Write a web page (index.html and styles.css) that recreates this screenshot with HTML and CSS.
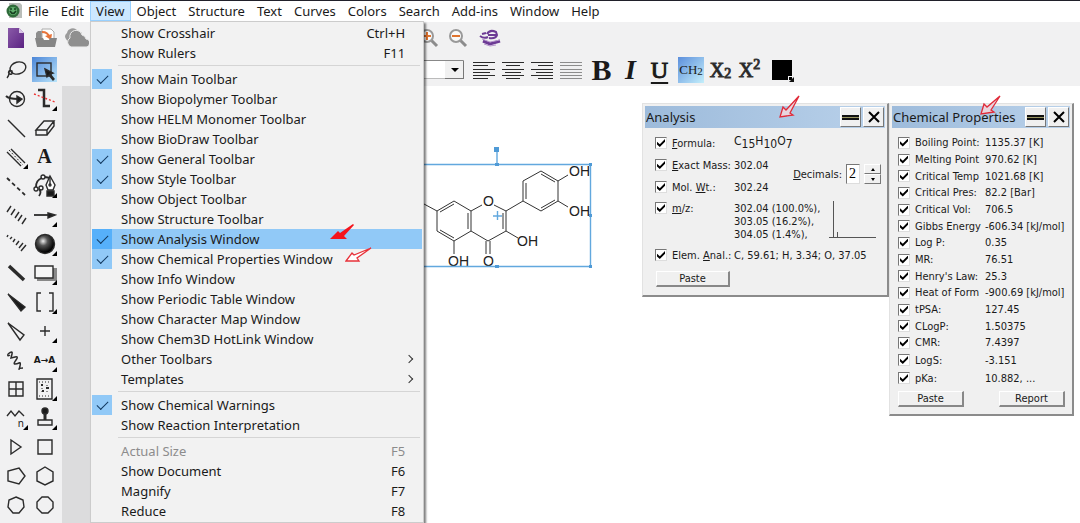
FILE: index.html
```
<!DOCTYPE html>
<html lang="en">
<head>
    <meta charset="UTF-8">
    <meta name="viewport" content="width=device-width, initial-scale=1.0">
    <title>ChemDraw</title>
    <link rel="stylesheet" href="styles.css">
</head>
<body>
    <nav class="menubar">
        <svg class="app-icon" width="16" height="16" viewBox="0 0 16 16">
            <path d="M3 0h11l2 2v13H3z" fill="#b9bdb9"/>
            <circle cx="7" cy="8" r="6.5" fill="#2f6b3a"/>
            <circle cx="7" cy="8" r="4" fill="#5fae6c"/>
            <path d="M4 8q3 5 6 0M4 6h2M8 6h2" stroke="#173f20" stroke-width="1.5" fill="none"/>
        </svg>
        <button class="menu-title">File</button>
        <button class="menu-title">Edit</button>
        <div class="menu-open">
            <button class="menu-title active">View</button>
            <div class="dropdown" role="menu">
                <button class="item"><span class="check"></span>Show Crosshair<kbd>Ctrl+H</kbd></button>
                <button class="item"><span class="check"></span>Show Rulers<kbd>F11</kbd></button>
                <hr>
                <button class="item checked"><span class="check"></span>Show Main Toolbar</button>
                <button class="item"><span class="check"></span>Show Biopolymer Toolbar</button>
                <button class="item"><span class="check"></span>Show HELM Monomer Toolbar</button>
                <button class="item"><span class="check"></span>Show BioDraw Toolbar</button>
                <button class="item checked"><span class="check"></span>Show General Toolbar</button>
                <button class="item checked"><span class="check"></span>Show Style Toolbar</button>
                <button class="item"><span class="check"></span>Show Object Toolbar</button>
                <button class="item"><span class="check"></span>Show Structure Toolbar</button>
                <button class="item checked hover"><span class="check"></span>Show Analysis Window</button>
                <button class="item checked"><span class="check"></span>Show Chemical Properties Window</button>
                <button class="item"><span class="check"></span>Show Info Window</button>
                <button class="item"><span class="check"></span>Show Periodic Table Window</button>
                <button class="item"><span class="check"></span>Show Character Map Window</button>
                <button class="item"><span class="check"></span>Show Chem3D HotLink Window</button>
                <button class="item submenu"><span class="check"></span>Other Toolbars</button>
                <button class="item submenu"><span class="check"></span>Templates</button>
                <hr>
                <button class="item checked"><span class="check"></span>Show Chemical Warnings</button>
                <button class="item"><span class="check"></span>Show Reaction Interpretation</button>
                <hr>
                <button class="item" disabled><span class="check"></span>Actual Size<kbd>F5</kbd></button>
                <button class="item"><span class="check"></span>Show Document<kbd>F6</kbd></button>
                <button class="item"><span class="check"></span>Magnify<kbd>F7</kbd></button>
                <button class="item"><span class="check"></span>Reduce<kbd>F8</kbd></button>
                <svg class="arrow arrow-solid" width="26" height="17" viewBox="0 0 26 17">
                    <path d="M0 15L8 7L10 9L23 0L24 1L14 12L17 15Z" fill="#f5141c"/>
                </svg>
                <svg class="arrow arrow-outline" width="28" height="17" viewBox="0 0 28 17">
                    <path d="M1 14L7 6L9 8L26 1L12 11L14 14Z" fill="#fff" stroke="#e8323a" stroke-width="1.3"/>
                </svg>
            </div>
        </div>
        <button class="menu-title">Object</button>
        <button class="menu-title">Structure</button>
        <button class="menu-title">Text</button>
        <button class="menu-title">Curves</button>
        <button class="menu-title">Colors</button>
        <button class="menu-title">Search</button>
        <button class="menu-title">Add-ins</button>
        <button class="menu-title">Window</button>
        <button class="menu-title">Help</button>
    </nav>

    <!-- main toolbar -->
    <div class="toolbar">
        <div class="file-tools">
            <button class="tool" aria-label="New">
                <svg width="18" height="22" viewBox="0 0 18 22">
                    <defs><linearGradient id="doc" x1="0" y1="0" x2="1" y2="1"><stop offset="0" stop-color="#8a5aa8"/><stop offset="1" stop-color="#5b2383"/></linearGradient></defs>
                    <path d="M1 1h11l5 5v15H1z" fill="url(#doc)"/><path d="M12 1v5h5z" fill="#d9c6e6"/>
                </svg>
            </button>
            <button class="tool" aria-label="Open">
                <svg width="22" height="20" viewBox="0 0 22 20">
                    <path d="M1 18V5l2-2h5l2 2h1v5H1z" fill="#8d8d8d"/>
                    <path d="M7 1h9l3 3v10H7z" fill="#fff" stroke="#aaa"/>
                    <path d="M7 4q6 0 7 5" stroke="#e8743a" stroke-width="2" fill="none"/><path d="M10 8l7-2-1 6z" fill="#e8743a"/>
                    <path d="M0 10h8l1 2h5l1-2h7l-2 9H2z" fill="#858585"/>
                </svg>
            </button>
            <button class="tool" aria-label="Cloud">
                <svg width="26" height="20" viewBox="0 0 26 20">
                    <path d="M3 11a4 4 0 0 1 1-6 6 6 0 0 1 10-3l5 3-6 9H5z" fill="#9b9b9b"/>
                    <path d="M8 19a5 5 0 0 1-1-9 6 6 0 0 1 12-3 5 5 0 0 1 4 4 4 4 0 0 1-1 8z" fill="#8f8f8f" stroke="#ececec"/>
                </svg>
            </button>
        </div>
        <div class="view-tools">
            <button class="tool" aria-label="Zoom in">
                <svg width="20" height="20" viewBox="0 0 20 20">
                    <path d="M12 12l6 6" stroke="#8c8c8c" stroke-width="3"/><circle cx="8" cy="8" r="6" fill="#fafafa" stroke="#999" stroke-width="2"/>
                    <path d="M4 8h8M8 4v8" stroke="#e0742f" stroke-width="2"/>
                </svg>
            </button>
            <button class="tool" aria-label="Zoom out">
                <svg width="20" height="20" viewBox="0 0 20 20">
                    <path d="M12 12l6 6" stroke="#8c8c8c" stroke-width="3"/><circle cx="8" cy="8" r="6" fill="#fafafa" stroke="#999" stroke-width="2"/>
                    <path d="M4 8h8" stroke="#e0742f" stroke-width="2"/>
                </svg>
            </button>
            <button class="tool" aria-label="ChemACX">
                <svg width="24" height="18" viewBox="0 0 24 18">
                    <g fill="none" stroke="#6d3b95"><path d="M9 5q3-5 9-2l1 3q-1 4-8 3M2 7q4 3 8 1M4 5l4-1M10 6h8" stroke-width="2"/><path d="M5 12l7 3 10-3" stroke-width="3"/></g>
                    <path d="M4 10l8 3 10-2M6 15l6 2 6-1" stroke="#b695cc" fill="none"/>
                </svg>
            </button>
        </div>
    </div>

    <div class="workspace">
        <!-- general toolbar -->
        <aside class="palette">
            <button aria-label="Lasso"><svg viewBox="0 0 24 24"><ellipse cx="14" cy="10" rx="8" ry="6" transform="rotate(-15 14 10)"/><path d="M6 12q-3 3 0 4t2-3q-3-1-3 2t-2 5"/></svg></button>
            <button class="selected" aria-label="Marquee"><svg viewBox="0 0 24 24"><rect x="4" y="5" width="14" height="13"/><path class="solid" d="M12 11l8 4-3 1 4 5-1 1-4-5-2 2z"/></svg></button>
            <button aria-label="Structure perspective"><svg viewBox="0 0 24 24"><circle cx="13" cy="12" r="7.5"/><path d="M2 9q3 3 12 3" stroke-width="2"/><path class="solid" d="M13 9l5 3-5 4z"/></svg></button>
            <button class="more" aria-label="Mass fragmentation"><svg viewBox="0 0 24 24"><path d="M5 3h6v16h6" stroke-width="2.5"/><path d="M1 7l21 8" stroke="#e33" stroke-dasharray="2 2"/></svg></button>
            <button aria-label="Solid bond"><svg viewBox="0 0 24 24"><path d="M4 4l17 17"/></svg></button>
            <button aria-label="Eraser"><svg viewBox="0 0 24 24"><path d="M3 14l8-9h10l-7 9zM3 14v5h11v-5M14 19l7-9V5"/></svg></button>
            <button class="more" aria-label="Multiple bonds"><svg viewBox="0 0 24 24"><path d="M3 7l14 14M7 4l14 14"/><path d="M5 5l14 15" stroke-width="1" stroke-dasharray="2 2"/></svg></button>
            <button class="letter" aria-label="Text">A</button>
            <button aria-label="Dashed bond"><svg viewBox="0 0 24 24"><path d="M3 4l18 17" stroke-width="1.8" stroke-dasharray="4 3"/></svg></button>
            <button class="more" aria-label="Pen"><svg viewBox="0 0 24 24"><circle cx="10" cy="3" r="2"/><circle cx="8" cy="14" r="2"/><circle cx="3" cy="15" r="2"/><path d="M9 4q-6 2-6 9M12 3l5 1M6 15q3 3 0 7" stroke-width="1.8"/><path d="M17 2l-4 9 2 5h5l2-5z" fill="#fff"/><path d="M17 3v8"/><circle cx="17" cy="11" r="1"/><path class="solid" d="M14 17h7v5h-7z"/></svg></button>
            <button aria-label="Hashed bond"><svg viewBox="0 0 24 24"><path d="M3 9l4-6M7 12l4-6M11 15l4-6M14 18l4-6M18 21l4-6"/></svg></button>
            <button class="more" aria-label="Arrow"><svg viewBox="0 0 24 24"><path d="M1 12h17" stroke-width="1.8"/><path class="solid" d="M15 10l7 2-7 3z"/></svg></button>
            <button aria-label="Hashed wedged bond"><svg viewBox="0 0 24 24"><path d="M3 5l1-2M6 7l2-2M9 10l2-3M12 13l3-4M15 16l4-5M17 19l5-6"/></svg></button>
            <button class="more" aria-label="Orbital"><svg viewBox="0 0 24 24"><defs><radialGradient id="ball" cx=".4" cy=".35" r=".6"><stop offset="0" stop-color="#eee"/><stop offset=".4" stop-color="#555"/><stop offset="1" stop-color="#000"/></radialGradient></defs><circle cx="12" cy="12" r="9.5" fill="url(#ball)"/></svg></button>
            <button aria-label="Bold bond"><svg viewBox="0 0 24 24"><path d="M5 5l15 14" stroke-width="3.5"/></svg></button>
            <button class="more" aria-label="Drawing element"><svg viewBox="0 0 24 24"><path d="M4 7h20v13H4z" fill="#888" stroke="none"/><path d="M2 5h18v12H2z" fill="#f6f6f6"/></svg></button>
            <button aria-label="Wedged bond"><svg viewBox="0 0 24 24"><path class="solid" d="M4 4l17 13-4 4z"/></svg></button>
            <button class="more" aria-label="Bracket"><svg viewBox="0 0 24 24"><path d="M8 3H4v18h4M16 3h4v18h-4"/></svg></button>
            <button aria-label="Hollow wedged bond"><svg viewBox="0 0 24 24"><path d="M4 4l16 12-4 5z"/></svg></button>
            <button class="more" aria-label="Chemical symbol"><svg viewBox="0 0 24 24"><path d="M12 7v10M7 12h10"/></svg></button>
            <button aria-label="Wavy bond"><svg viewBox="0 0 24 24"><path d="M4 6q5-4 4 0t-1 4 4-1 1 3-1 4 4-1 1 3-1 3 4-1M4 6q-1 3 2 1" stroke-width="1.5"/></svg></button>
            <button class="letter small more" aria-label="Atom map">A→A</button>
            <button aria-label="Table"><svg viewBox="0 0 24 24"><path d="M5 5h14v14H5zM12 5v14M5 12h14"/></svg></button>
            <button class="more" aria-label="TLC plate"><svg viewBox="0 0 24 24"><path d="M4 2h15v20H4z"/><path d="M6 5h11M6 19h11M9 8v8M14 8v8" stroke-width="1" stroke-dasharray="1 2"/><path d="M8 8h2M13 11h3M9 14h2" stroke-width="2"/></svg></button>
            <button class="chain more" aria-label="Acyclic chain"><svg viewBox="0 0 24 24"><path d="M3 10l4-5 4 5 4-5 5 5"/></svg><span>n</span></button>
            <button class="more" aria-label="Template"><svg viewBox="0 0 24 24"><circle class="solid" cx="12" cy="5" r="3"/><path d="M12 8v6" stroke-width="3"/><path d="M5 14h14v5H5z"/></svg></button>
            <button aria-label="Cyclopropane"><svg viewBox="0 0 24 24"><path d="M7 5v14l10-7z"/></svg></button>
            <button aria-label="Cyclobutane"><svg viewBox="0 0 24 24"><path d="M5 5h14v14H5z"/></svg></button>
            <button aria-label="Cyclopentane"><svg viewBox="0 0 24 24"><path d="M15 4l6 8-6 8-11-3V7z"/></svg></button>
            <button aria-label="Cyclohexane"><svg viewBox="0 0 24 24"><path d="M12 3l8 5v9l-8 4-8-4V8z"/></svg></button>
            <button aria-label="Cycloheptane"><svg viewBox="0 0 24 24"><path d="M12 4l7 3 1 7-5 6H9l-5-6 1-7z"/></svg></button>
            <button aria-label="Cyclooctane"><svg viewBox="0 0 24 24"><path d="M9 4h6l5 5v6l-5 5H9l-5-5V9z"/></svg></button>
        </aside>

        <div class="main">
            <!-- style toolbar -->
            <div class="toolbar style-toolbar">
                <div class="size-box">
                    <select aria-label="Font size"><option></option></select>
                </div>
                <div class="group">
                    <button class="tool" aria-label="Left"><svg width="22" height="18" viewBox="0 0 22 18"><path d="M0 1h22M0 8h22M0 14h22" /><path d="M0 4h15M0 11h17M0 17h15"/></svg></button>
                    <button class="tool" aria-label="Center"><svg width="22" height="18" viewBox="0 0 22 18"><path d="M0 1h22M0 8h22M0 14h22"/><path d="M4 4h14M3 11h16M4 17h14"/></svg></button>
                    <button class="tool" aria-label="Right"><svg width="22" height="18" viewBox="0 0 22 18"><path d="M0 1h22M0 8h22M0 14h22"/><path d="M7 4h15M5 11h17M7 17h15"/></svg></button>
                    <button class="tool faded" aria-label="Justify"><svg width="22" height="18" viewBox="0 0 22 18"><path d="M0 1h22M0 4h22M0 8h22M0 11h22M0 14h22M0 17h22"/></svg></button>
                </div>
                <div class="group">
                    <button class="tool bold">B</button>
                    <button class="tool italic">I</button>
                    <button class="tool underline">U</button>
                </div>
                <div class="group">
                    <button class="tool formula">CH<small>2</small></button>
                    <button class="tool script">X<small class="low">2</small></button>
                    <button class="tool script">X<small class="high">2</small></button>
                </div>
                <div class="group">
                    <button class="tool swatch-btn" aria-label="Color"><span class="swatch more"></span></button>
                </div>
            </div>

            <div class="canvas">
                <!-- quercetin -->
                <svg class="molecule" width="170" height="125" viewBox="424 145 170 125">
                    <g class="bonds">
                        <path d="M424 204L437 211L454 201L471 211V231L454 241L437 231V211M471 211L482 205M494 205L506 211V231L488 241L471 231M454 241V254"/>
                        <path d="M440 212L454 204M468 213V229M454 238L440 230M503 213V229M486 241V254M490 241V254"/>
                        <path d="M506 231L518 238M506 211L523 201V181L541 171L558 181V201L541 211L523 201M558 181L568 175M558 201L568 207"/>
                        <path d="M526 199V183M541 174L555 182M555 200L541 208"/>
                    </g>
                    <g class="atoms">
                        <text x="483" y="206">O</text>
                        <text x="569" y="176">OH</text>
                        <text x="569" y="216">OH</text>
                        <text x="517" y="246">OH</text>
                        <text x="448" y="266">OH</text>
                        <text x="483" y="266">O</text>
                    </g>
                    <g class="selection">
                        <path d="M424 164.5H590.5V266.5H424M497 164V150M493 216h9M497.5 211v9"/>
                        <path class="handles" d="M494 147h5v5h-5zM495 163h4v3h-4zM589 163h3v3h-3zM589 214h3v3h-3zM589 265h3v3h-3zM495 265h4v3h-4z"/>
                    </g>
                </svg>

                <section class="window analysis">
                    <header>
                        <h2>Analysis</h2>
                        <button class="win-btn" aria-label="Collapse"><i class="dash"></i></button>
                        <button class="win-btn" aria-label="Close"><svg width="12" height="12" viewBox="0 0 12 12"><path d="M1 1l10 10M11 1L1 11"/></svg></button>
                    </header>
                    <div class="analysis-body">
                        <div class="results">
                            <input type="checkbox" id="formula" checked><label for="formula"><u>F</u>ormula:</label><span class="chem-formula">C<sub>15</sub>H<sub>10</sub>O<sub>7</sub></span>
                            <input type="checkbox" id="mass" checked><label for="mass"><u>E</u>xact Mass:</label><span>302.04</span>
                            <input type="checkbox" id="weight" checked><label for="weight">Mol. <u>W</u>t.:</label><span>302.24</span>
                            <input type="checkbox" id="mz" checked><label for="mz"><u>m</u>/z:</label><span class="peaks">302.04 (100.0%),<br>303.05 (16.2%),<br>304.05 (1.4%),</span>
                            <input type="checkbox" id="elem" checked><label for="elem">Elem. <u>A</u>nal.:</label><span>C, 59.61; H, 3.34; O, 37.05</span>
                        </div>
                        <div class="decimals">
                            <label for="decimals"><u>D</u>ecimals:</label>
                            <input type="text" id="decimals" value="2">
                            <div class="spinner">
                                <button aria-label="Increase"></button>
                                <button class="down" aria-label="Decrease"></button>
                            </div>
                        </div>
                        <svg class="spectrum" width="47" height="38" viewBox="0 0 47 38"><path d="M0 36.5H47M4.5 0V37M8.5 31V37"/></svg>
                        <button class="push">Paste</button>
                    </div>
                    <svg class="arrow arrow-analysis" width="24" height="24" viewBox="0 0 24 24">
                        <path d="M2 22L5 12L8 15L21 1L12 18L15 20Z" fill="#e9d5de" stroke="#e02a38" stroke-width="1.3"/>
                    </svg>
                </section>

                <section class="window properties">
                    <header>
                        <h2>Chemical Properties</h2>
                        <button class="win-btn" aria-label="Collapse"><i class="dash"></i></button>
                        <button class="win-btn" aria-label="Close"><svg width="12" height="12" viewBox="0 0 12 12"><path d="M1 1l10 10M11 1L1 11"/></svg></button>
                    </header>
                    <table>
                        <tr><td><input type="checkbox" id="p1" checked></td><th><label for="p1">Boiling Point:</label></th><td>1135.37 [K]</td></tr>
                        <tr><td><input type="checkbox" id="p2" checked></td><th><label for="p2">Melting Point</label></th><td>970.62 [K]</td></tr>
                        <tr><td><input type="checkbox" id="p3" checked></td><th><label for="p3">Critical Temp</label></th><td>1021.68 [K]</td></tr>
                        <tr><td><input type="checkbox" id="p4" checked></td><th><label for="p4">Critical Pres:</label></th><td>82.2 [Bar]</td></tr>
                        <tr><td><input type="checkbox" id="p5" checked></td><th><label for="p5">Critical Vol:</label></th><td>706.5</td></tr>
                        <tr><td><input type="checkbox" id="p6" checked></td><th><label for="p6">Gibbs Energy</label></th><td>-606.34 [kJ/mol]</td></tr>
                        <tr><td><input type="checkbox" id="p7" checked></td><th><label for="p7">Log P:</label></th><td>0.35</td></tr>
                        <tr><td><input type="checkbox" id="p8" checked></td><th><label for="p8">MR:</label></th><td>76.51</td></tr>
                        <tr><td><input type="checkbox" id="p9" checked></td><th><label for="p9">Henry's Law:</label></th><td>25.3</td></tr>
                        <tr><td><input type="checkbox" id="p10" checked></td><th><label for="p10">Heat of Form</label></th><td>-900.69 [kJ/mol]</td></tr>
                        <tr><td><input type="checkbox" id="p11" checked></td><th><label for="p11">tPSA:</label></th><td>127.45</td></tr>
                        <tr><td><input type="checkbox" id="p12" checked></td><th><label for="p12">CLogP:</label></th><td>1.50375</td></tr>
                        <tr><td><input type="checkbox" id="p13" checked></td><th><label for="p13">CMR:</label></th><td>7.4397</td></tr>
                        <tr class="tall"><td><input type="checkbox" id="p14" checked></td><th><label for="p14">LogS:</label></th><td>-3.151</td></tr>
                        <tr class="tall"><td><input type="checkbox" id="p15" checked></td><th><label for="p15">pKa:</label></th><td>10.882, ...</td></tr>
                    </table>
                    <footer>
                        <button class="push">Paste</button>
                        <button class="push">Report</button>
                    </footer>
                    <svg class="arrow arrow-properties" width="24" height="24" viewBox="0 0 24 24">
                        <path d="M2 22L5 12L8 15L21 4L12 18L15 20Z" fill="#e9d5de" stroke="#e02a38" stroke-width="1.3"/>
                    </svg>
                </section>
            </div>
        </div>
    </div>
</body>
</html>
```
FILE: styles.css
```
* {
    box-sizing: border-box;
}

body {
    display: flex;
    flex-direction: column;
    min-height: 100vh;
    margin: 0;
    background: #f1f1f2;
    color: #1a1a1a;
    font-family: "Noto Sans", sans-serif;
    font-size: 13px;
}

button {
    margin: 0;
    padding: 0;
    border: none;
    background: none;
    color: inherit;
    font: inherit;
}

/* menu bar */
.menubar {
    display: flex;
    height: 22px;
    border-top: 1px solid #20202a;
    background: #fff;
}

.app-icon {
    margin: 2px 0 0 6px;
}

.menu-title {
    display: block;
    height: 20px;
    padding: 0 6px;
    line-height: 20px;
}

.menu-title.active {
    background: #cce8ff;
    box-shadow: 0 0 0 1px #99d1ff inset;
}

.menu-open {
    position: relative;
}

.dropdown {
    position: absolute;
    top: 20px;
    left: 0;
    z-index: 10;
    width: 334px;
    padding: 1px;
    border: 1px solid #ccc;
    background: #f2f2f2;
    box-shadow: 2px 2px 2px rgba(0, 0, 0, 0.5);
}

.dropdown hr {
    height: 1px;
    margin: 2px 2px 3px 26px;
    border: none;
    background: #d5d5d5;
}

.item {
    display: flex;
    align-items: center;
    width: 100%;
    height: 20px;
    padding-right: 17px;
    line-height: 20px;
    white-space: nowrap;
}

.item:disabled {
    color: #8c8c8c;
}

.item kbd {
    margin-left: auto;
    font: inherit;
}

.check {
    display: flex;
    align-items: center;
    justify-content: center;
    width: 20px;
    height: 20px;
    margin-right: 9px;
}

.checked .check {
    background: #91c9f7;
}

.checked .check::before {
    content: "";
    width: 10px;
    height: 5px;
    margin-bottom: 3px;
    border-left: 1px solid #123a60;
    border-bottom: 1px solid #123a60;
    transform: rotate(-45deg);
}

.item.hover {
    background: #91c9f7;
}

.item.hover .check {
    background: #56b0fa;
}

.submenu::after {
    content: "";
    width: 5px;
    height: 5px;
    margin-left: auto;
    margin-right: -7px;
    border-top: 1px solid #333;
    border-right: 1px solid #333;
    transform: rotate(45deg);
}

.arrow {
    position: absolute;
}

.arrow-solid {
    top: 202px;
    left: 239px;
}

.arrow-outline {
    top: 225px;
    left: 254px;
}

/* toolbars */
.toolbar {
    display: flex;
    align-items: center;
    height: 31px;
}

.tool {
    display: flex;
    align-items: center;
    justify-content: center;
    width: 29px;
    height: 26px;
}

.file-tools {
    display: flex;
    gap: 1px;
    width: 414px;
    padding-left: 1px;
}

.view-tools {
    display: flex;
}

.view-tools .tool:last-child {
    width: 36px;
}

.workspace {
    display: flex;
    flex: 1;
}

.palette {
    display: grid;
    grid-template-columns: 25px 25px;
    grid-auto-rows: 25px;
    gap: 4px;
    width: 62px;
    padding: 4px 0 0 3px;
}

.palette button {
    position: relative;
    display: flex;
    align-items: center;
    justify-content: center;
}

.palette svg {
    width: 24px;
    height: 24px;
    fill: none;
    stroke: #2b2b2b;
    stroke-width: 1.4;
}

.palette .solid {
    fill: #1a1a1a;
}

.palette .selected {
    background: linear-gradient(135deg, #4c86d8, #b9e4fa);
}

.more {
    position: relative;
}

.more::after {
    content: "";
    position: absolute;
    right: 0;
    bottom: 0;
    border-left: 5px solid transparent;
    border-bottom: 5px solid #000;
}

.palette .letter {
    font: bold 20px "Liberation Serif", serif;
}

.palette .letter.small {
    font: bold 9px "DejaVu Sans", sans-serif;
}

.chain span {
    position: absolute;
    right: 4px;
    bottom: 1px;
    font-size: 10px;
    line-height: 12px;
}

.main {
    display: flex;
    flex: 1;
    flex-direction: column;
}

.style-toolbar {
    gap: 2px;
    height: 33px;
}

.size-box {
    position: relative;
    width: 80px;
    height: 19px;
    margin: 0 3px 0 322px;
}

.size-box select {
    appearance: none;
    width: 100%;
    height: 100%;
    padding: 0;
    border: 1px solid #888;
    border-right-color: #bbb;
    border-bottom-color: #bbb;
    border-radius: 0;
    background: #fff;
}

/* raised drop-down button with its triangle */
.size-box::before {
    content: "";
    position: absolute;
    top: 1px;
    right: 0;
    width: 18px;
    height: 17px;
    border-right: 1px solid #777;
    border-bottom: 1px solid #777;
    background: #f1f1f1;
}

.size-box::after {
    content: "";
    position: absolute;
    top: 8px;
    right: 5px;
    border: 4px solid transparent;
    border-top-color: #000;
    border-bottom: none;
}

.group {
    display: flex;
}

.group svg {
    fill: none;
    stroke: #2b2b2b;
    stroke-width: 1;
    shape-rendering: crispEdges;
}

.faded {
    opacity: 0.5;
}

.bold,
.italic,
.underline,
.script,
.formula {
    font-family: "Liberation Serif", serif;
}

.bold {
    font-size: 30px;
    font-weight: bold;
}

.italic {
    font-size: 28px;
    font-style: italic;
    font-weight: bold;
}

.underline {
    font-size: 24px;
    text-decoration: underline 2px;
    text-underline-offset: 4px;
    -webkit-text-stroke: 1px #1a1a1a;
}

.underline,
.script {
    line-height: 24px;
}

.script {
    font-size: 20px;
    -webkit-text-stroke: 1px #333;
}

.script small {
    font-size: 14px;
}

.low {
    margin-top: 8px;
}

.high {
    margin-bottom: 10px;
}

.formula {
    width: 26px;
    margin: 0 2px;
    background: linear-gradient(135deg, #5c8fdc, #c4effb);
    font-size: 13px;
}

.formula small {
    margin-top: 2px;
    font-size: 11px;
}

.swatch-btn {
    padding-left: 2px;
}

.swatch {
    width: 20px;
    height: 20px;
    background: #000;
}

.swatch.more::after {
    right: -2px;
    bottom: -2px;
    border-bottom-color: #111;
    outline: 1px solid #f1f1f2;
}

/* drawing area */
.canvas {
    position: relative;
    flex: 1;
    border-left: 28px solid #dcdcdd;
    background: #fff;
}

.molecule {
    position: absolute;
    top: 59px;
    left: 334px;
}

.bonds {
    fill: none;
    stroke: #333;
    stroke-width: 1;
}

.atoms {
    fill: #222;
    font: 14px "Liberation Sans", sans-serif;
}

.selection {
    fill: none;
    stroke: #62a8de;
    stroke-width: 1.4;
}

.selection .handles {
    fill: #4f9ad6;
    stroke: none;
}

/* floating windows */
.window {
    position: absolute;
    top: 17px;
    padding: 2px;
    border: 1px solid #e2e2e2;
    border-right: 2px solid #8b8b8b;
    border-bottom: 2px solid #8b8b8b;
    background: #f0f0f0;
    font: 11px/13px "DejaVu Sans Condensed", "DejaVu Sans", sans-serif;
}

.analysis {
    right: 191px;
    width: 247px;
}

.properties {
    right: 6px;
    width: 185px;
}

.window header {
    display: flex;
    align-items: center;
    gap: 2px;
    height: 22px;
    padding: 0 1px;
    background: linear-gradient(90deg, #9dbbdb, #b9d1ea);
}

.window h2 {
    flex: 1;
    margin: 0;
    font: 13px/22px "Noto Sans", sans-serif;
    white-space: nowrap;
}

.win-btn {
    display: flex;
    align-items: center;
    justify-content: center;
    width: 21px;
    height: 20px;
    border: 1px solid #fff;
    border-right-color: #777;
    border-bottom-color: #777;
    background: #f0f0f0;
}

.win-btn svg {
    stroke: #000;
    stroke-width: 2;
}

.dash {
    width: 17px;
    height: 5px;
    border: solid #111;
    border-width: 2px 0;
    background: #9a9662;
}

input[type="checkbox"] {
    display: block;
    appearance: none;
    width: 12px;
    height: 12px;
    margin: 0;
    border: 1px solid #777;
    border-right-color: #ddd;
    border-bottom-color: #ddd;
    background: #fff;
}

input[type="checkbox"]:checked::before {
    content: "";
    display: block;
    width: 8px;
    height: 8px;
    margin: 1px;
    background: #000;
    clip-path: polygon(0 35%, 35% 65%, 100% 0, 100% 35%, 35% 100%, 0 70%);
}

.analysis-body {
    position: relative;
    padding: 4px 0 6px 10px;
}

.results {
    display: grid;
    grid-template-columns: 12px 57px 1fr;
    grid-template-rows: 22px 22px 22px 46px 22px;
    column-gap: 5px;
    align-items: center;
    white-space: nowrap;
}

.results #mz,
.results [for="mz"],
.peaks {
    align-self: start;
    margin-top: 4px;
}

.chem-formula,
.chem-formula sub {
    font-size: 12px;
    line-height: 0;
}

.decimals {
    position: absolute;
    top: 36px;
    right: 4px;
    display: flex;
    align-items: center;
    gap: 4px;
}

.decimals input {
    width: 14px;
    height: 20px;
    padding: 0 2px;
    border: 1px solid #777;
    border-right-color: #ddd;
    border-bottom-color: #ddd;
    font: 14px "Liberation Serif", serif;
}

.spinner {
    display: flex;
    flex-direction: column;
}

.spinner button {
    display: flex;
    align-items: center;
    justify-content: center;
    width: 17px;
    height: 10px;
    border: 1px solid #fff;
    border-right-color: #777;
    border-bottom-color: #777;
}

.spinner button::before {
    content: "";
    border: 2px solid transparent;
    border-top: none;
    border-bottom: 3px solid #000;
}

.spinner .down::before {
    transform: rotate(180deg);
}

.spectrum {
    position: absolute;
    top: 73px;
    right: 9px;
    fill: none;
    stroke: #555;
}

.push {
    width: 74px;
    height: 16px;
    border: 1px solid #fff;
    border-right: 2px solid #888;
    border-bottom: 2px solid #888;
    line-height: 13px;
}

.analysis .push {
    display: block;
    margin: 5px 0 0 1px;
}

.properties table {
    margin: 6px 0 4px 6px;
    border-collapse: collapse;
}

.properties tr {
    height: 17px;
}

.properties tr:nth-child(3n) {
    height: 16px;
}

.properties tr.tall {
    height: 18px;
}

.properties td,
.properties th {
    padding: 0;
    font-weight: normal;
    text-align: left;
    white-space: nowrap;
}

.properties td:first-child {
    width: 17px;
}

.properties th {
    width: 70px;
}

.properties footer {
    display: flex;
    justify-content: space-between;
    padding: 0 5px 5px 6px;
}

.properties .push {
    width: 66px;
}

.arrow-analysis {
    top: -9px;
    left: 135px;
}

.arrow-properties {
    top: -12px;
    left: 89px;
}
```
